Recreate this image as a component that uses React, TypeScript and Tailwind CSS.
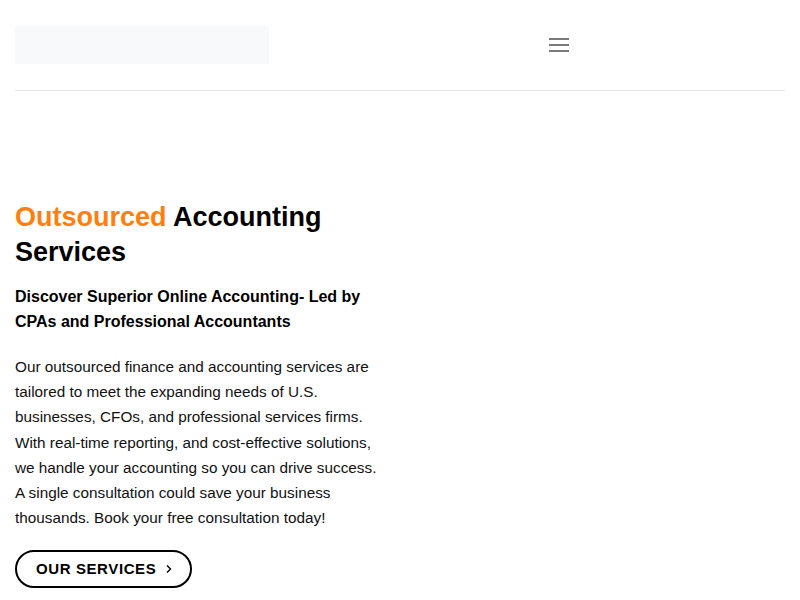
import React from "react";

export default function App() {
  return (
    <div className="min-h-[600px] w-[800px] bg-white text-black" style={{ fontFamily: '"Liberation Sans", Arial, sans-serif' }}>
      <header className="mx-[15px] flex h-[91px] items-center border-b border-[#e6e6e6]">
        <div className="h-[38px] w-[254px] bg-[#f8f9fb]" />
        <div className="flex flex-1 justify-center pl-[64px]">
          <button className="flex h-[20px] w-[20px] flex-col justify-between py-[3px]" aria-label="menu">
            <span className="block h-[2px] w-[20px] bg-[#7a7a7a]" />
            <span className="block h-[2px] w-[20px] bg-[#7a7a7a]" />
            <span className="block h-[2px] w-[20px] bg-[#7a7a7a]" />
          </button>
        </div>
      </header>
      <main className="ml-[15px] w-[370px] pt-[109px]">
        <h1 className="text-[27px] font-bold leading-[35px]">
          <span className="text-[#ff7f0e]">Outsourced</span> Accounting Services
        </h1>
        <h2 className="mt-[14px] text-[16px] font-bold leading-[25px]">
          Discover Superior Online Accounting- Led by CPAs and Professional Accountants
        </h2>
        <p className="mt-[20px] text-[15.3px] leading-[25.2px] text-[#111]">
          Our outsourced finance and accounting services are tailored to meet the expanding needs of U.S.
          businesses, CFOs, and professional services firms. With real-time reporting, and cost-effective
          solutions, we handle your accounting so you can drive success. A single consultation could save your
          business thousands. Book your free consultation today!
        </p>
        <a
          href="#"
          className="mt-[20px] inline-flex h-[38px] w-[177px] items-center rounded-full border-2 border-black pl-[19px] text-[15px] font-bold tracking-[0.6px] text-black"
        >
          OUR SERVICES
          <svg className="ml-[9px]" width="8" height="10" viewBox="0 0 8 10" fill="none">
            <path d="M2 1.5 L5.5 5 L2 8.5" stroke="black" strokeWidth="1.4" />
          </svg>
        </a>
      </main>
    </div>
  );
}
